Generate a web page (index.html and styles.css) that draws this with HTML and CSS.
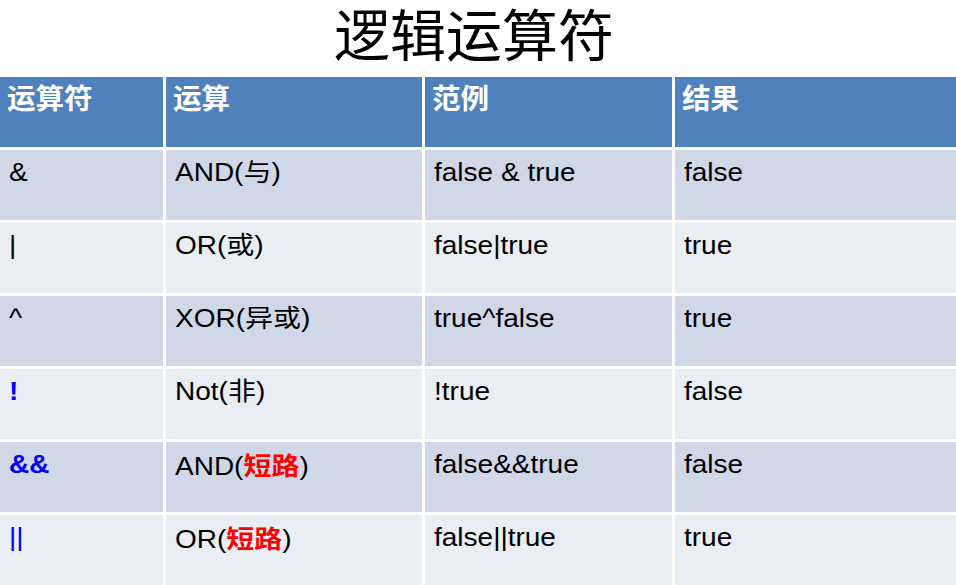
FILE: index.html
```html
<!DOCTYPE html>
<html lang="zh">
<head>
<meta charset="utf-8">
<title>逻辑运算符</title>
<link rel="stylesheet" href="styles.css">
</head>
<body>
<div class="slide">
  <h1 class="title">逻辑运算符</h1>
  <div class="table">
    <div class="cell head"><span class="t">运算符</span></div>
    <div class="cell head"><span class="t">运算</span></div>
    <div class="cell head"><span class="t">范例</span></div>
    <div class="cell head"><span class="t">结果</span></div>

    <div class="cell odd"><span class="t">&amp;</span></div>
    <div class="cell odd"><span class="t">AND(与)</span></div>
    <div class="cell odd"><span class="t">false &amp; true</span></div>
    <div class="cell odd"><span class="t">false</span></div>

    <div class="cell even"><span class="t">|</span></div>
    <div class="cell even"><span class="t">OR(或)</span></div>
    <div class="cell even"><span class="t">false|true</span></div>
    <div class="cell even"><span class="t">true</span></div>

    <div class="cell odd"><span class="t">^</span></div>
    <div class="cell odd"><span class="t">XOR(异或)</span></div>
    <div class="cell odd"><span class="t">true^false</span></div>
    <div class="cell odd"><span class="t">true</span></div>

    <div class="cell even"><span class="t op">!</span></div>
    <div class="cell even"><span class="t">Not(非)</span></div>
    <div class="cell even"><span class="t">!true</span></div>
    <div class="cell even"><span class="t">false</span></div>

    <div class="cell odd"><span class="t op">&amp;&amp;</span></div>
    <div class="cell odd"><span class="t">AND(<b class="short">短路</b>)</span></div>
    <div class="cell odd"><span class="t">false&amp;&amp;true</span></div>
    <div class="cell odd"><span class="t">false</span></div>

    <div class="cell even"><span class="t op thin">||</span></div>
    <div class="cell even"><span class="t">OR(<b class="short">短路</b>)</span></div>
    <div class="cell even"><span class="t">false||true</span></div>
    <div class="cell even"><span class="t">true</span></div>
  </div>
</div>
</body>
</html>
```
FILE: styles.css
```css
html, body {
  margin: 0;
  padding: 0;
  background: #ffffff;
}

.slide {
  width: 956px;
  height: 585px;
  overflow: hidden;
  display: flex;
  flex-direction: column;
}

.title {
  margin: 0;
  height: 78px;
  line-height: 74px;
  padding-right: 8px;
  text-align: center;
  font-family: "Liberation Sans", "Noto Sans CJK SC", sans-serif;
  font-weight: 400;
  font-size: 56px;
  color: #000000;
  box-sizing: border-box;
}

.table {
  display: grid;
  grid-template-columns: 163px 256px 247px 1fr;
  grid-template-rows: 70px repeat(6, 70px);
  column-gap: 3px;
  row-gap: 3px;
}

.cell {
  padding: 8px 0 0 9px;
  font-family: "Liberation Sans", "Noto Sans CJK SC", sans-serif;
  font-size: 25px;
  line-height: 29px;
  color: #000000;
  white-space: nowrap;
}

.cell .t {
  display: inline-block;
  transform: scale(1.12, 1);
  transform-origin: left top;
}

.head {
  background: #4f81bd;
  color: #ffffff;
  font-family: "Noto Sans CJK SC", sans-serif;
  font-weight: 700;
  font-size: 28px;
  line-height: 34px;
  padding-top: 3px;
  padding-left: 7px;
}

.head .t {
  transform: scale(1.02, 1);
}

.odd {
  background: #d0d8e8;
}

.even {
  background: #e9edf4;
}

.op {
  color: #0000ff;
  font-weight: 700;
}

.thin {
  font-weight: 400;
}

.short {
  color: #ff0000;
  font-family: "Noto Sans CJK SC", sans-serif;
  font-weight: 700;
}
```
